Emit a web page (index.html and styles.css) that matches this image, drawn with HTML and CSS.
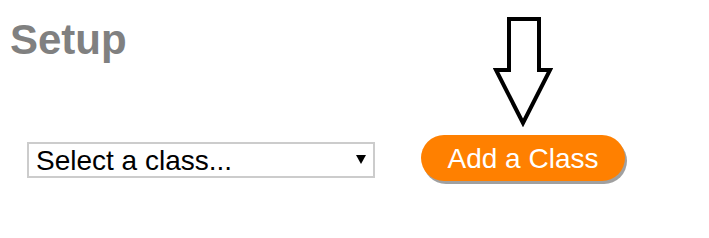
FILE: index.html
```html
<!DOCTYPE html>
<html>
<head>
<meta charset="utf-8">
<link rel="stylesheet" href="styles.css">
</head>
<body>
<div class="page">
  <h1 class="title">Setup</h1>
  <div class="controls">
    <div class="select-wrap">
      <select class="class-select">
        <option>Select a class...</option>
      </select>
      <svg class="caret" width="10" height="9" viewBox="0 0 10 9"><polygon points="0,0 10,0 5,9" fill="#000"/></svg>
    </div>
    <div class="button-wrap">
      <svg class="pointer" width="60" height="110" viewBox="0 0 60 110">
        <polygon points="16,2 46,2 46,53 57,53 30,106 3,53 16,53" fill="#fff" stroke="#000" stroke-width="4" stroke-linejoin="miter"/>
      </svg>
      <button class="add-btn">Add a Class</button>
    </div>
  </div>
</div>
</body>
</html>
```
FILE: styles.css
```css
html, body {
  margin: 0;
  padding: 0;
  background: #fff;
}
.page {
  width: 709px;
  height: 238px;
  font-family: "Liberation Sans", Arial, sans-serif;
}
.title {
  margin: 0;
  padding: 20px 0 0 10px;
  font-size: 42px;
  line-height: 40px;
  font-weight: bold;
  color: #808080;
}
.controls {
  display: flex;
  align-items: center;
  gap: 46px;
  padding: 75px 0 0 27px;
}
.select-wrap {
  position: relative;
  width: 348px;
  height: 36px;
  margin-top: 4px;
}
.class-select {
  appearance: none;
  -webkit-appearance: none;
  width: 348px;
  height: 36px;
  box-sizing: border-box;
  border: 2px solid #cccccc;
  border-radius: 0;
  background: #fff;
  padding: 0 0 0 7px;
  font-family: "Liberation Sans", Arial, sans-serif;
  font-size: 28px;
  color: #000;
  outline: none;
}
.caret {
  position: absolute;
  right: 9px;
  top: 13px;
}
.button-wrap {
  position: relative;
}
.pointer {
  position: absolute;
  left: 72px;
  bottom: 54px;
}
.add-btn {
  display: block;
  width: 204px;
  height: 46px;
  border: none;
  border-radius: 23px;
  background: #ff8000;
  color: #fff;
  font-family: "Liberation Sans", Arial, sans-serif;
  font-size: 28px;
  padding: 2px 0 0;
  box-shadow: 2px 3px 0 #a0a0a0;
}
```
